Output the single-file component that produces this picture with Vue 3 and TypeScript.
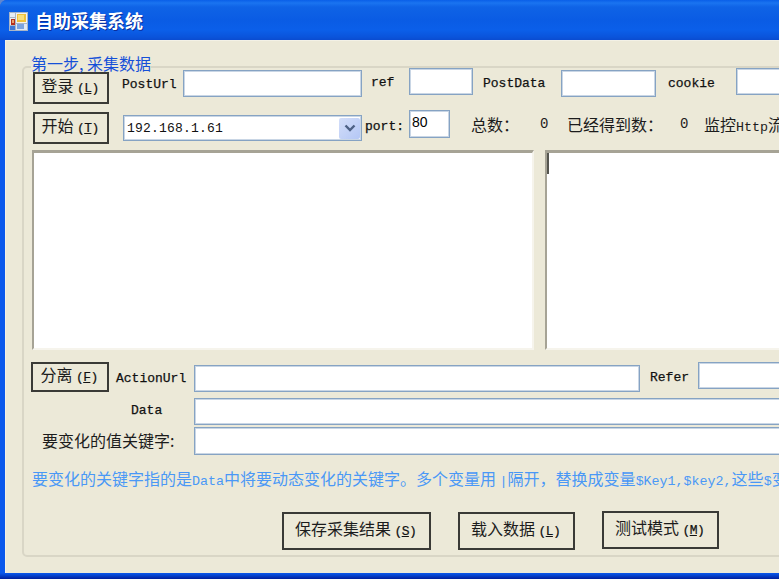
<script setup lang="ts">
</script>

<template>
  <div class="viewport">
    <div class="window">
      <header class="titlebar">
        <svg class="app-icon" width="19" height="19" viewBox="0 0 19 19">
          <rect x="0" y="0" width="19" height="19" fill="#a9b6c8" />
          <rect x="1" y="1" width="5" height="4" fill="#e6edf5" />
          <rect x="1" y="6" width="5" height="7" fill="#e6edf5" />
          <rect x="2" y="7" width="4" height="6" fill="#b5301c" />
          <rect x="3" y="8" width="2" height="3" fill="#e9a16a" />
          <rect x="1" y="14" width="5" height="4" fill="#3f78d4" />
          <rect x="7" y="1" width="11" height="10" fill="#f0f2f5" />
          <rect x="8" y="2" width="9" height="8" fill="#efc23c" />
          <rect x="9" y="3" width="6" height="5" fill="#f8df7e" />
          <rect x="7" y="12" width="11" height="6" fill="#dfe8f4" />
          <rect x="8" y="12" width="7" height="5" fill="#7ba4e0" />
        </svg>
        <h1 class="title">自助采集系统</h1>
      </header>

      <main class="client">
        <section class="group">
          <span class="legend">第一步, 采集数据</span>

          <div class="row row-1">
            <button class="btn btn-login">登录 <span class="key">(<u>L</u>)</span></button>
            <label class="mono lb-posturl">PostUrl</label>
            <input class="field f-posturl" />
            <label class="mono lb-ref">ref</label>
            <input class="field f-ref" />
            <label class="mono lb-postdata">PostData</label>
            <input class="field f-postdata" />
            <label class="mono lb-cookie">cookie</label>
            <input class="field f-cookie" />
          </div>

          <div class="row row-2">
            <button class="btn btn-start">开始 <span class="key">(<u>T</u>)</span></button>
            <div class="select">
              <span class="select-text">192.168.1.61</span>
              <span class="select-arrow">
                <svg width="12" height="8" viewBox="0 0 12 8">
                  <path d="M1.5 1.5 L6 6 L10.5 1.5" fill="none" stroke="#4d6185" stroke-width="2.4" />
                </svg>
              </span>
            </div>
            <label class="mono lb-port">port:</label>
            <input class="field f-port" value="80" />
            <span class="stat s-total">总数：</span>
            <span class="stat-num n-total">0</span>
            <span class="stat s-got">已经得到数：</span>
            <span class="stat-num n-got">0</span>
            <span class="stat s-mon">监控<span class="latin">Http</span>流量</span>
          </div>

          <div class="row row-text">
            <textarea class="memo memo-left"></textarea>
            <div class="memo-wrap">
              <textarea class="memo memo-right"></textarea>
              <span class="caret"></span>
            </div>
          </div>

          <div class="row row-3">
            <button class="btn btn-split">分离 <span class="key">(<u>F</u>)</span></button>
            <label class="mono lb-action">ActionUrl</label>
            <input class="field f-action" />
            <label class="mono lb-refer">Refer</label>
            <input class="field f-refer" />
          </div>

          <div class="row row-4">
            <label class="mono lb-data">Data</label>
            <input class="field f-wide" />
          </div>

          <div class="row row-5">
            <label class="lb-key">要变化的值关键字:</label>
            <input class="field f-wide f-wide-2" />
          </div>

          <p class="hint">要变化的关键字指的是<span class="latin">Data</span>中将要动态变化的关键字。多个变量用 <span class="latin">|</span>隔开，替换成变量<span class="latin">$Key1,$key2,</span>这些<span class="latin">$</span>变量会被替换</p>

          <div class="row row-btns">
            <button class="btn btn-save">保存采集结果 <span class="key">(<u>S</u>)</span></button>
            <button class="btn btn-load">载入数据 <span class="key">(<u>L</u>)</span></button>
            <button class="btn btn-test">测试模式 <span class="key">(<u>M</u>)</span></button>
          </div>
        </section>
      </main>
    </div>
  </div>
</template>

<style scoped>
.viewport {
  width: 779px;
  height: 579px;
  overflow: hidden;
  background: #5f86cf;
  font-family: "Noto Sans CJK SC", "Liberation Sans", sans-serif;
  color: #1c1c1c;
}
.window {
  width: 1000px;
  height: 579px;
  display: flex;
  flex-direction: column;
  border-radius: 7px 7px 0 0;
  background: linear-gradient(180deg, #0a58ec 0, #0a58ec 573px, #0647d4 575px, #001f9c 579px);
  overflow: hidden;
}
.titlebar {
  height: 40px;
  flex: none;
  box-sizing: border-box;
  padding: 12px 0 0 9px;
  display: flex;
  align-items: flex-start;
  background: linear-gradient(
    180deg,
    #0a5fe8 0,
    #1a74f0 3px,
    #0f63e6 7px,
    #0a5ce4 20px,
    #0b5fe9 30px,
    #0a54db 37px,
    #0a4cd0 40px
  );
}
.app-icon {
  flex: none;
}
.title {
  margin: -3px 0 0 7px;
  font-size: 18px;
  line-height: 22px;
  font-weight: 700;
  color: #fff;
  text-shadow: 1px 1px 0 #0a2f9c;
}
.client {
  flex: none;
  height: 533px;
  margin-left: 5px;
  box-sizing: border-box;
  padding: 26px 0 0 17px;
  background: #ece9d8;
  border-top: 1px solid #f3f1e6;
  border-left: 1px solid #f3f1e6;
}
.group {
  position: relative;
  box-sizing: border-box;
  width: 960px;
  height: 491px;
  margin-top: -1px;
  margin-left: -1px;
  border: 2px solid #d9d6c6;
  border-radius: 5px;
}
.legend {
  position: absolute;
  left: 7px;
  top: -15px;
  height: 17px;
  background: #ece9d8;
  color: #1550d8;
  font-size: 16px;
  line-height: 20px;
  white-space: nowrap;
}
.row {
  display: flex;
  align-items: flex-start;
}
.row-2 {
  margin-top: 6px;
}
.row-text {
  margin-top: 6px;
  margin-left: 8px;
}
.row-3 {
  margin-top: 12px;
}
.row-4 {
  margin-top: 6px;
}
.row-5 {
  margin-top: 2px;
}
.row-btns {
  margin-top: 23px;
}

.btn {
  flex: none;
  box-sizing: border-box;
  margin: 0;
  padding: 0 2px 2px 0;
  background: #ece9d8;
  border: 2px solid #3a3a36;
  border-radius: 0;
  color: #1c1c1c;
  font-family: inherit;
  font-size: 16px;
  line-height: 20px;
  white-space: nowrap;
}
.key {
  font-family: "Liberation Mono", monospace;
  font-size: 13px;
  letter-spacing: -0.6px;
  color: #111;
  -webkit-text-stroke: 0.2px #111;
}
.btn-login {
  width: 76px;
  height: 32px;
  margin: 4px 0 0 9px;
}
.btn-start {
  width: 76px;
  height: 32px;
  margin: 2px 0 0 9px;
}
.btn-split {
  width: 78px;
  height: 30px;
  margin-left: 7px;
  padding-bottom: 4px;
}
.btn-save {
  width: 149px;
  height: 38px;
  margin: 1px 0 0 258px;
}
.btn-load {
  width: 117px;
  height: 38px;
  margin: 1px 0 0 27px;
}
.btn-test {
  width: 117px;
  height: 38px;
  margin-left: 27px;
}

.mono {
  flex: none;
  box-sizing: border-box;
  font-family: "Liberation Mono", monospace;
  font-size: 13px;
  line-height: 16px;
  color: #111;
  -webkit-text-stroke: 0.25px #111;
  white-space: nowrap;
}
.latin {
  font-family: "Liberation Mono", monospace;
  font-size: 13.33px;
}
.lb-posturl {
  width: 61px;
  margin: 9px 0 0 13px;
}
.lb-ref {
  width: 38px;
  margin: 7px 0 0 9px;
}
.lb-postdata {
  width: 78px;
  margin: 8px 0 0 10px;
}
.lb-cookie {
  width: 68px;
  margin: 8px 0 0 12px;
}
.lb-port {
  width: 44px;
  margin: 9px 0 0 3px;
}
.lb-action {
  width: 78px;
  margin: 9px 0 0 7px;
}
.lb-refer {
  width: 48px;
  margin: 8px 0 0 10px;
}
.lb-data {
  width: 63px;
  margin: 5px 0 0 107px;
}
.lb-key {
  flex: none;
  width: 152px;
  margin: 3px 0 0 18px;
  font-size: 16px;
  line-height: 20px;
  white-space: nowrap;
}

.field {
  flex: none;
  box-sizing: border-box;
  height: 27px;
  margin: 0;
  padding: 0 2px;
  border: 1px solid #86a3c3;
  box-shadow: inset 0 0 0 1px #c9d6e5;
  border-radius: 0;
  background: #fff;
  outline: none;
  font-family: "Liberation Sans", sans-serif;
  font-size: 14px;
}
.f-posturl {
  width: 179px;
  margin-top: 2px;
}
.f-ref {
  width: 64px;
}
.f-postdata {
  width: 95px;
  margin-top: 2px;
}
.f-cookie {
  width: 100px;
}
.f-port {
  width: 41px;
  height: 28px;
  padding-bottom: 4px;
}
.f-action {
  width: 446px;
  margin-top: 3px;
}
.f-refer {
  width: 120px;
}
.f-wide {
  width: 720px;
}
.f-wide-2 {
  height: 28px;
}

.select {
  flex: none;
  box-sizing: border-box;
  display: flex;
  align-items: center;
  justify-content: space-between;
  width: 239px;
  height: 26px;
  margin: 5px 0 0 14px;
  padding: 0 1px 0 3px;
  border: 1px solid #86a3c3;
  box-shadow: inset 0 0 0 1px #c9d6e5;
  background: #fff;
}
.select-text {
  font-family: "Liberation Mono", monospace;
  font-size: 13px;
  letter-spacing: 0.2px;
  color: #111;
}
.select-arrow {
  display: flex;
  align-items: center;
  justify-content: center;
  width: 21px;
  height: 21px;
  border-radius: 2px;
  background: linear-gradient(135deg, #d3def9, #b4c7f5);
}

.stat,
.stat-num {
  flex: none;
  margin-top: 4px;
  font-size: 16px;
  line-height: 20px;
  white-space: nowrap;
}
.stat-num {
  font-family: "Liberation Mono", monospace;
  font-size: 14px;
}
.s-total {
  width: 69px;
  margin-left: 21px;
}
.n-total {
  width: 27px;
}
.s-got {
  width: 113px;
}
.n-got {
  width: 24px;
}
.s-mon {
  height: 20px;
}

.memo {
  display: block;
  box-sizing: border-box;
  height: 200px;
  margin: 0;
  padding: 0;
  resize: none;
  outline: none;
  background: #fff;
  border-style: solid;
  border-width: 3px 2px 2px 2px;
  border-color: #a6a395 #f6f4ec #f6f4ec #a6a395;
}
.memo-left {
  width: 502px;
}
.memo-wrap {
  position: relative;
  margin-left: 11px;
}
.memo-right {
  width: 400px;
}
.caret {
  position: absolute;
  left: 2px;
  top: 3px;
  width: 2px;
  height: 21px;
  background: #55554f;
}

.hint {
  height: 20px;
  margin: 13px 0 0 8px;
  color: #4a98f6;
  font-size: 16px;
  line-height: 20px;
  white-space: nowrap;
}
</style>

<style>
html,
body {
  margin: 0;
  overflow: hidden;
}
</style>
